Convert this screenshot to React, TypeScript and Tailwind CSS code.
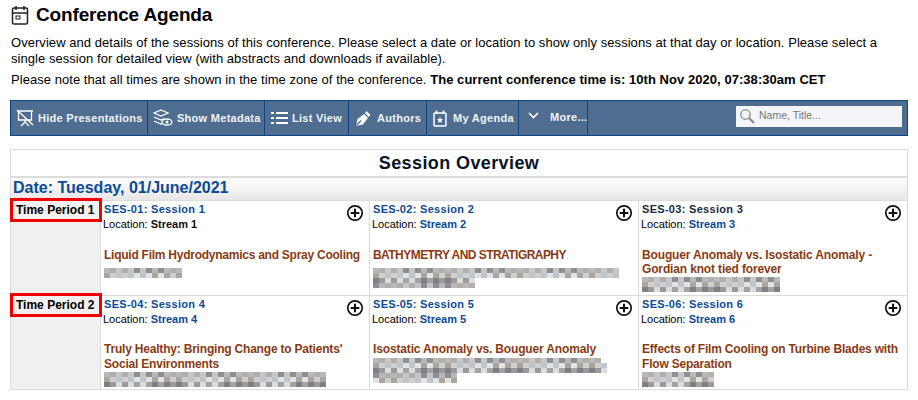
import React from "react";

const pixelShades = ["#b9b9bb", "#a3a3a6", "#cfcfcf", "#8f8f93", "#dcdcdc", "#aaa59f", "#c4c8ca", "#9a9a9e", "#e2e4e4", "#b3aea8", "#7f7f85", "#bfc5c8"];

function Blurred({ rows, className = "" }: { rows: number[]; className?: string }) {
  return (
    <div className={`flex flex-col ${className}`}>
      {rows.map((width, r) => (
        <div key={r} className="flex">
          {Array.from({ length: Math.ceil(width / 6) }).map((_, i) => (
            <span
              key={i}
              className="block w-[6px] h-[5px] shrink-0"
              style={{ backgroundColor: pixelShades[(i * 7 + r * 5 + (i % 3) * 2) % pixelShades.length] }}
            />
          ))}
        </div>
      ))}
    </div>
  );
}

function PlusIcon() {
  return (
    <svg width="18" height="18" viewBox="0 0 18 18" className="absolute top-[3px] right-[5px]">
      <circle cx="9" cy="9" r="7.2" fill="#fff" stroke="#111" strokeWidth="1.7" />
      <path d="M9 4.700v8.600M4.700 9h8.600" stroke="#111" strokeWidth="2" />
    </svg>
  );
}

function Session({
  code,
  name,
  stream,
  title,
  rows,
  dark,
  darkStream,
  titleClass,
  blurClass,
}: {
  code: string;
  name: string;
  stream: string;
  title: React.ReactNode;
  rows: number[];
  dark?: boolean;
  darkStream?: boolean;
  titleClass: string;
  blurClass?: string;
}) {
  return (
    <div className="relative border-l border-[#dcdcdc] pl-[3px] pt-[1px] min-w-0">
      <div className={`text-[11px] leading-[14px] tracking-[0.3px] font-bold ${dark ? "text-[#1a2a44]" : "text-[#0b4a94]"}`}>
        {code}: {name}
      </div>
      <div className="text-[11px] leading-[14px] mt-[1px] -ml-[1px]">
        <span className="text-black">Location: </span>
        <span className={`font-bold ${darkStream ? "text-[#111]" : "text-[#0b4a94]"}`}>{stream}</span>
      </div>
      <div className={`text-[12px] font-bold text-[#8a3a12] whitespace-nowrap tracking-[-0.15px] ${titleClass}`}>{title}</div>
      <Blurred rows={rows} className={blurClass} />
      <PlusIcon />
    </div>
  );
}

function TimeCell({ label }: { label: string }) {
  return (
    <div className="relative bg-[#f0f0f0]">
      <div className="absolute -top-[3px] -left-[1px] w-[92px] h-[24px] border-[3px] border-[#f00000] text-[12px] font-bold text-black leading-[18px] pl-[3px] z-10 whitespace-nowrap">
        {label}
      </div>
    </div>
  );
}

function ToolItem({ icon, label, className = "" }: { icon: React.ReactNode; label: string; className?: string }) {
  return (
    <div className={`flex items-center gap-[4px] h-full border-r border-[#0d4584] pl-[5px] pr-[4px] text-[11px] tracking-[0.28px] font-bold text-[#f0f3f7] whitespace-nowrap ${className}`}>
      {icon}
      <span>{label}</span>
    </div>
  );
}

const s = { fill: "none", stroke: "#fff", strokeWidth: 1.3 };

export default function App() {
  return (
    <div className="w-[918px] h-[400px] bg-white overflow-hidden font-['Liberation_Sans',Arial,sans-serif]">
      <div className="flex items-center h-[30px] pl-[11px]">
        <svg width="18" height="22" viewBox="0 0 18 22" className="shrink-0">
          <rect x="1.500" y="4" width="15" height="16" rx="1.500" fill="none" stroke="#222" strokeWidth="1.500" />
          <path d="M1.500 9h15M5 2v4M13 2v4" stroke="#222" strokeWidth="1.500" />
          <rect x="5" y="12" width="4" height="3" fill="none" stroke="#222" />
        </svg>
        <h1 className="ml-[7px] text-[19px] tracking-[-0.15px] font-bold leading-[24px] text-black">Conference Agenda</h1>
      </div>
      <div className="mt-[5px] pl-[11px] pr-[30px] text-[13px] tracking-[0.05px] leading-[16px] text-black">
        <p>
          Overview and details of the sessions of this conference. Please select a date or location to show only sessions at that day or location. Please select a single session for detailed view (with abstracts and downloads if available).
        </p>
        <p className="mt-[5px] whitespace-nowrap">
          Please note that all times are shown in the time zone of the conference. <b>The current conference time is: 10th Nov 2020, 07:38:30am CET</b>
        </p>
      </div>

      <div className="mt-[12px] ml-[10px] w-[898px] h-[36px] bg-[#4e6d90] border border-[#0d4584] flex items-center">
        <ToolItem
          label="Hide Presentations"
          className="w-[137px]"
          icon={
            <svg width="18" height="18" viewBox="0 0 18 18" className="shrink-0">
              <path d="M1 2h16M2.500 2v9h13V2M9 11v2M9 13l-4 4M9 13l4 4M1 1l16 15" {...s} />
            </svg>
          }
        />
        <ToolItem
          label="Show Metadata"
          className="w-[117px]"
          icon={
            <svg width="20" height="18" viewBox="0 0 20 18" className="shrink-0">
              <path d="M8 1l7 3-7 3-7-3zM1 8l7 3 3-1.300M1 12l7 3 1-.4" {...s} />
              <ellipse cx="14" cy="13" rx="5" ry="3" {...s} />
              <circle cx="14" cy="13" r="1.500" fill="#fff" />
            </svg>
          }
        />
        <ToolItem
          label="List View"
          className="w-[84px]"
          icon={
            <svg width="17" height="14" viewBox="0 0 17 14" className="shrink-0 ml-[1px]">
              <path d="M0 2h3M0 7h3M0 12h3" stroke="#fff" strokeWidth="2" />
              <path d="M5 2h12M5 7h12M5 12h12" stroke="#fff" strokeWidth="1.800" />
            </svg>
          }
        />
        <ToolItem
          label="Authors"
          className="w-[78px] gap-[6px] pl-[6px]"
          icon={
            <svg width="16" height="17" viewBox="0 0 16 17" className="shrink-0">
              <path d="M1 16l1.500-7L9 4l4 4-5 6.500z" fill="#fff" />
              <path d="M10 3l1.500-2L15.500 5l-2 2z" fill="#fff" />
              <path d="M1.500 15.500L6 10.500" stroke="#4e6d90" strokeWidth="1.200" />
            </svg>
          }
        />
        <ToolItem
          label="My Agenda"
          className="w-[92px] gap-[6px] pl-[6px]"
          icon={
            <svg width="14" height="17" viewBox="0 0 14 17" className="shrink-0">
              <rect x="1" y="3" width="12" height="13" rx="1" {...s} strokeWidth={1.500} />
              <path d="M3.500 0.500v3.500M10.500 0.500v3.500" stroke="#fff" strokeWidth="1.700" />
              <path d="M7 7l.9 1.900 2.100.3-1.500 1.400.4 2.100L7 11.700l-1.900 1 .4-2.100L4 9.200l2.100-.3z" fill="#fff" />
            </svg>
          }
        />
        <ToolItem
          label="More..."
          className="w-[69px] gap-[11px] pl-[9px] pb-[2px]"
          icon={
            <svg width="11" height="7" viewBox="0 0 11 7" className="shrink-0 -mt-[3px]">
              <path d="M1 1l4.500 4.500L10 1" fill="none" stroke="#fff" strokeWidth="1.700" />
            </svg>
          }
        />
        <div className="ml-auto mr-[5px] mb-[4px] w-[166px] h-[21px] bg-[#f3f5f8] flex items-center pl-[3px]">
          <svg width="16" height="16" viewBox="0 0 16 16" className="shrink-0">
            <circle cx="6.500" cy="6.500" r="4.700" fill="none" stroke="#9a9a9a" strokeWidth="1.500" />
            <path d="M10 10l5 5" stroke="#8a8a8a" strokeWidth="2.200" />
          </svg>
          <span className="ml-[4px] text-[10.5px] text-[#757575]">Name, Title...</span>
        </div>
      </div>

      <div className="mt-[13px] ml-[10px] w-[898px] border border-[#dcdcdc]">
        <h2 className="h-[28px] text-center text-[18px] tracking-[0.4px] font-bold leading-[26px] text-[#0a1428] border-b-2 border-[#dcdcdc]">Session Overview</h2>
        <div className="h-[23px] border-b border-[#dcdcdc] bg-gradient-to-b from-white to-[#e6e6e6] pl-[2px] text-[16px] font-bold leading-[20px] text-[#0b4a94]">
          Date: Tuesday, 01/June/2021
        </div>
        <div className="grid grid-cols-[89px_269px_269px_1fr] grid-rows-[94px_94px]">
          <TimeCell label="Time Period 1" />
          <Session code="SES-01" name="Session 1" stream="Stream 1" darkStream titleClass="mt-[17px] leading-[14px]" title={<span className="tracking-[-0.25px]">Liquid Film Hydrodynamics and Spray Cooling</span>} rows={[78, 78]} blurClass="mt-[6px]" />
          <Session code="SES-02" name="Session 2" stream="Stream 2" titleClass="mt-[17px] leading-[14px]" title={<span className="tracking-[-0.55px]">BATHYMETRY AND STRATIGRAPHY</span>} rows={[246, 246, 102, 102]} blurClass="mt-[6px]" />
          <Session code="SES-03" name="Session 3" dark stream="Stream 3" titleClass="mt-[17px] leading-[14px]" title={<>Bouguer Anomaly vs. Isostatic Anomaly -<br />Gordian knot tied forever</>} rows={[138, 138, 138]} blurClass="mt-[1px]" />
          <div className="relative col-span-4 grid grid-cols-subgrid border-t border-[#dcdcdc]">
            <TimeCell label="Time Period 2" />
            <Session code="SES-04" name="Session 4" stream="Stream 4" titleClass="mt-[16px] leading-[15px]" title={<span className="tracking-[-0.2px]">Truly Healthy: Bringing Change to Patients'<br />Social Environments</span>} rows={[222, 222, 222]} />
            <Session code="SES-05" name="Session 5" stream="Stream 5" titleClass="mt-[16px] leading-[15px]" title="Isostatic Anomaly vs. Bouguer Anomaly" rows={[228, 234, 234, 84, 84]} blurClass="mt-[1px]" />
            <Session code="SES-06" name="Session 6" stream="Stream 6" titleClass="mt-[16px] leading-[15px]" title={<span className="tracking-[-0.2px]">Effects of Film Cooling on Turbine Blades with<br />Flow Separation</span>} rows={[72, 72, 72]} />
          </div>
        </div>
      </div>
    </div>
  );
}
